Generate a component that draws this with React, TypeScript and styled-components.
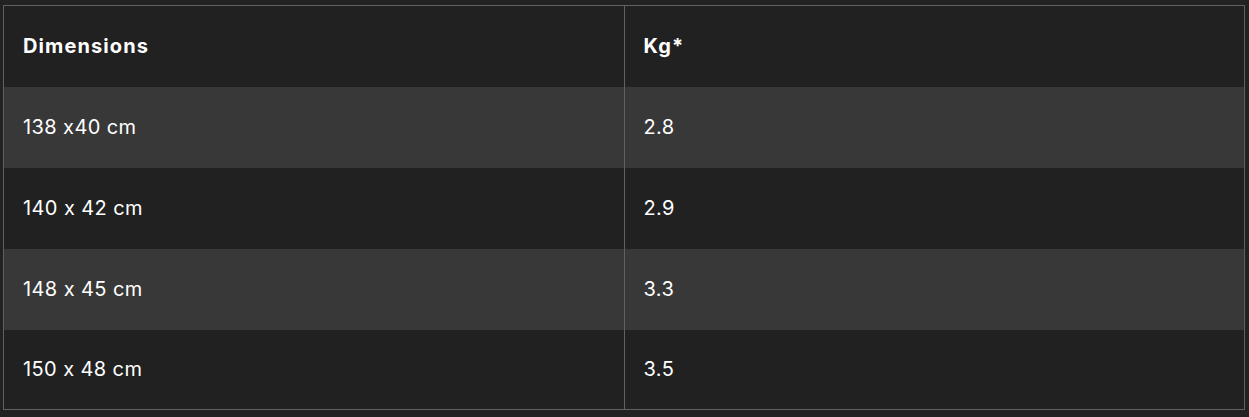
import React from "react";
import styled, { createGlobalStyle } from "styled-components";

const Global = createGlobalStyle`
  html, body { margin: 0; padding: 0; background: #222222; }
  body {
    padding: 5px 4px 0 3px;
    font-family: Inter, "Noto Sans", sans-serif;
    font-feature-settings: "calt" 0;
  }
`;

const Table = styled.table`
  width: 100%;
  border-collapse: collapse;
  border: 1px solid #616161;
  color: #ffffff;
`;

const Row = styled.tr<{ $shade: boolean }>`
  height: 81px;
  background: ${(p) => (p.$shade ? "#383838" : "#212121")};
  tbody &:last-child { height: 80px; }
`;

const HeadCell = styled.th`
  width: 50%;
  text-align: left;
  padding: 0 19px;
  font-size: 20px;
  font-weight: 700;
  letter-spacing: 1.1px;
  border-right: 1px solid #616161;
  &:last-child { border-right: none; }
`;

const Cell = styled.td`
  width: 50%;
  padding: 0 19px;
  font-size: 20px;
  font-weight: 400;
  letter-spacing: 0.4px;
  border-right: 1px solid #616161;
  &:last-child { border-right: none; }
`;

const rows = [
  ["138 x40 cm", "2.8"],
  ["140 x 42 cm", "2.9"],
  ["148 x 45 cm", "3.3"],
  ["150 x 48 cm", "3.5"],
];

export default function App() {
  return (
    <>
      <Global />
      <Table>
        <thead>
          <Row $shade={false}>
            <HeadCell>Dimensions</HeadCell>
            <HeadCell>Kg*</HeadCell>
          </Row>
        </thead>
        <tbody>
          {rows.map((r, i) => (
            <Row key={i} $shade={i % 2 === 0}>
              <Cell>{r[0]}</Cell>
              <Cell>{r[1]}</Cell>
            </Row>
          ))}
        </tbody>
      </Table>
    </>
  );
}
